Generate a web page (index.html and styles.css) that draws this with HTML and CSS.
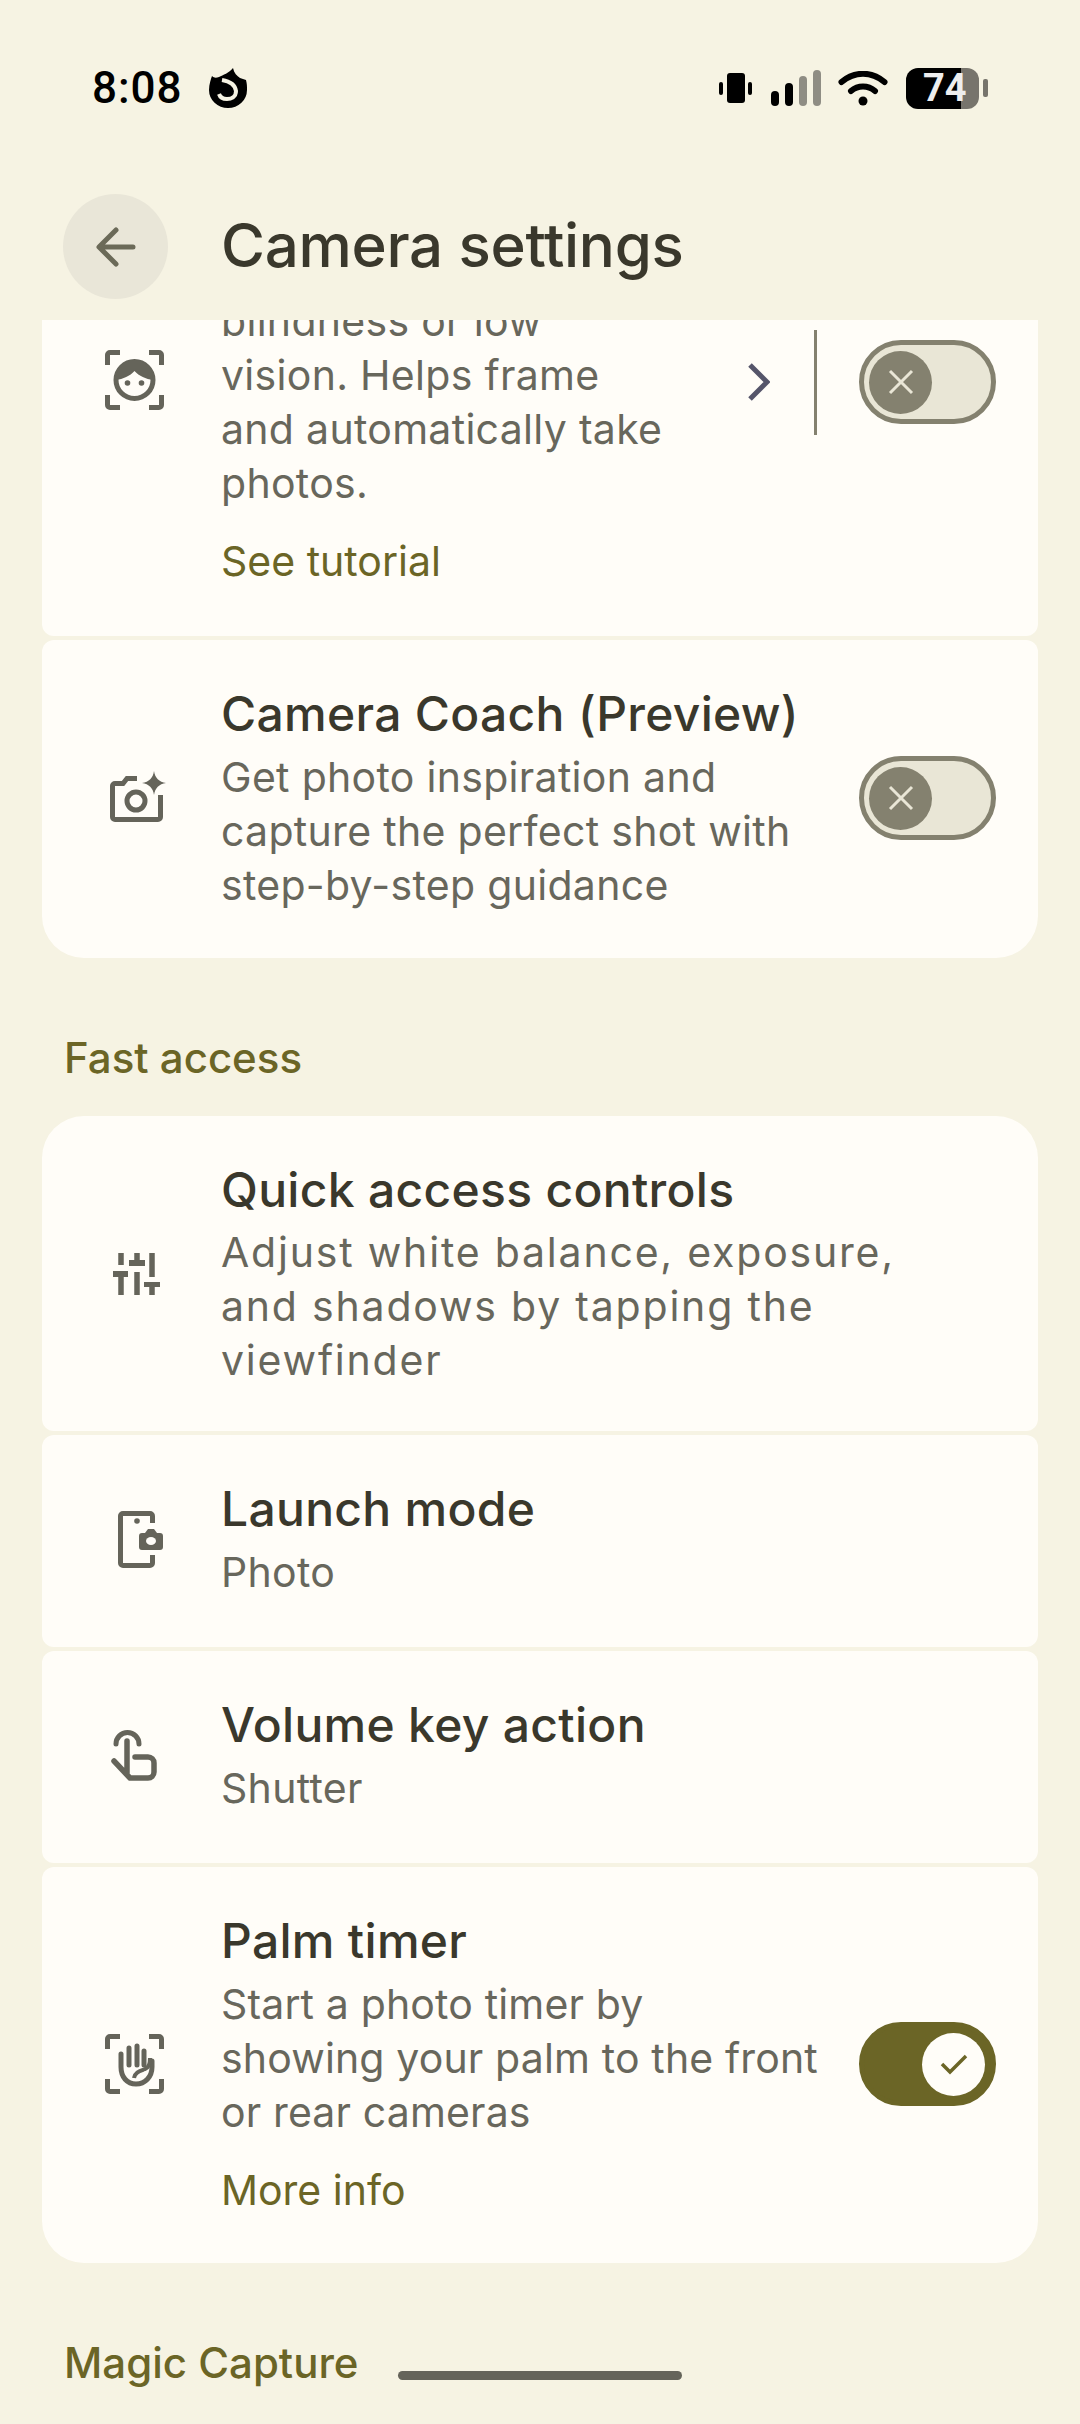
FILE: index.html
```html
<!DOCTYPE html>
<html lang="en">
<head>
    <meta charset="UTF-8">
    <meta name="viewport" content="width=device-width, initial-scale=1.0">
    <title>Camera settings</title>
    <link rel="stylesheet" href="styles.css">
</head>
<body>
    <div class="status-bar">
        <div class="status-left">
            <span class="clock">8:08</span>
            <!-- browser notification icon -->
            <svg class="fox" viewBox="0 0 40 40">
                <path d="M25 0c1 5 4 8 7 10l6 2c1 4 1 6 1 10a19 18 0 1 1-38 0c0-6 2-11 3-14 2 2 4 2 7 1 4-2 10-4 14-9z" fill="#000"/>
                <path d="M14 12c6 1 13 4 14 11 0 6-5 8-9 8-4 0-7-2-8-5" fill="none" stroke="#f6f3e3" stroke-width="4"/>
            </svg>
        </div>
        <div class="status-right">
            <svg class="vibrate" viewBox="0 0 33 30">
                <rect x="8" y="0" width="18" height="30" rx="3" fill="#000"/>
                <rect x="0" y="9" width="4" height="13" rx="2" fill="#000"/>
                <rect x="29" y="9" width="4" height="13" rx="2" fill="#000"/>
            </svg>
            <svg class="signal" viewBox="0 0 50 36">
                <rect x="0" y="21" width="8" height="15" rx="4" fill="#000"/>
                <rect x="14" y="13" width="8" height="23" rx="4" fill="#000"/>
                <rect x="28" y="6" width="8" height="30" rx="4" fill="#8f8d84"/>
                <rect x="42" y="0" width="8" height="36" rx="4" fill="#8f8d84"/>
            </svg>
            <svg class="wifi" viewBox="0 0 50 35">
                <path d="M3.500 11c13-11 30-11 43 0" fill="none" stroke="#000" stroke-width="6" stroke-linecap="round"/>
                <path d="M13 20c7-6 17-6 24 0" fill="none" stroke="#000" stroke-width="6" stroke-linecap="round"/>
                <circle cx="25" cy="30" r="4.500" fill="#000"/>
            </svg>
            <div class="battery">
                <div class="battery-body">
                    <span class="battery-level">74</span>
                </div>
                <div class="battery-tip"></div>
            </div>
        </div>
    </div>

    <div class="app-bar">
        <div class="back-button">
            <svg viewBox="0 0 42 42">
                <path d="M38 21H6M21 4L4 21l17 17" fill="none" stroke="#6b6a58" stroke-width="5" stroke-linecap="round" stroke-linejoin="round"/>
            </svg>
        </div>
        <h1 class="page-title">Camera settings</h1>
    </div>

    <div class="scroller">
        <div class="group">
            <div class="card card-cut">
                <svg class="icon" viewBox="0 0 58 58">
                    <path d="M1.500 14V4a2.500 2.500 0 0 1 2.500-2.500h10M43 1.500h10a2.500 2.500 0 0 1 2.500 2.500v10M1.500 44v10a2.500 2.500 0 0 0 2.500 2.500h10M43 56.500h10a2.500 2.500 0 0 0 2.500-2.500V44" fill="none" stroke="#65645a" stroke-width="5"/>
                    <circle cx="28.500" cy="29" r="18.500" fill="none" stroke="#65645a" stroke-width="5"/>
                    <path d="M10 29C10 18 18 9 28.500 9S47 18 47 29C40 28 33 25 28.500 20 24 25 17 28 10 29z" fill="#65645a"/>
                    <circle cx="21.500" cy="32" r="2.800" fill="#65645a"/>
                    <circle cx="35.500" cy="32" r="2.800" fill="#65645a"/>
                </svg>
                <div class="card-text narrow">
                    <p class="desc">blindness or low vision. Helps frame and automatically take photos.</p>
                    <p class="link">See tutorial</p>
                </div>
                <svg class="chevron" viewBox="0 0 22 38">
                    <path d="M2 2l17 17L2 36" fill="none" stroke="#55556a" stroke-width="5"/>
                </svg>
                <div class="divider"></div>
                <div class="toggle">
                    <div class="thumb">
                        <svg viewBox="0 0 26 26"><path d="M2 2l22 22M24 2L2 24" fill="none" stroke="#e9e6d6" stroke-width="3"/></svg>
                    </div>
                </div>
            </div>
            <div class="card card-last">
                <svg class="icon" viewBox="0 0 58 58">
                    <path d="M31 9.500H21l-4 5H9a2.500 2.500 0 0 0-2.500 2.500v31a2.500 2.500 0 0 0 2.500 2.500h43a2.500 2.500 0 0 0 2.500-2.500V26" fill="none" stroke="#65645a" stroke-width="5"/>
                    <circle cx="30" cy="32" r="9" fill="none" stroke="#65645a" stroke-width="5"/>
                    <path d="M48 2c1 7 5 11 12 12-7 1-11 5-12 12-1-7-5-11-12-12 7-1 11-5 12-12z" fill="#65645a"/>
                </svg>
                <div class="card-text">
                    <h3 class="title">Camera Coach (Preview)</h3>
                    <p class="desc">Get photo inspiration and capture the perfect shot with step-by-step guidance</p>
                </div>
                <div class="toggle">
                    <div class="thumb">
                        <svg viewBox="0 0 26 26"><path d="M2 2l22 22M24 2L2 24" fill="none" stroke="#e9e6d6" stroke-width="3"/></svg>
                    </div>
                </div>
            </div>
        </div>

        <h2 class="section">Fast access</h2>

        <div class="group">
            <div class="card card-first">
                <svg class="icon" viewBox="0 0 58 58">
                    <path d="M15 8v12M15 32v18M31 8v7M31 27v23M46 8v24M46 42v8" fill="none" stroke="#65645a" stroke-width="5.500"/>
                    <path d="M7 26h15v6H7zM23 15h16v6H23zM38 37h16v5H38z" fill="#65645a"/>
                </svg>
                <div class="card-text">
                    <h3 class="title">Quick access controls</h3>
                    <p class="desc wide">Adjust white balance, exposure,<br>and shadows by tapping the viewfinder</p>
                </div>
            </div>
            <div class="card">
                <svg class="icon" viewBox="0 0 58 58">
                    <path d="M46.500 13V6a2.500 2.500 0 0 0-2.500-2.500H17A2.500 2.500 0 0 0 14.500 6v47a2.500 2.500 0 0 0 2.500 2.500h27a2.500 2.500 0 0 0 2.500-2.500v-8" fill="none" stroke="#65645a" stroke-width="5"/>
                    <circle cx="31" cy="11" r="2.800" fill="#65645a"/>
                    <path d="M33 26a3 3 0 0 1 3-3h3l3-4h6l3 4h3a3 3 0 0 1 3 3v11a3 3 0 0 1-3 3H36a3 3 0 0 1-3-3z" fill="#65645a"/>
                    <ellipse cx="45" cy="31" rx="5" ry="4" fill="#fffdf8"/>
                </svg>
                <div class="card-text">
                    <h3 class="title">Launch mode</h3>
                    <p class="desc">Photo</p>
                </div>
            </div>
            <div class="card">
                <svg class="icon" viewBox="0 0 58 58">
                    <path d="M10 18a11.500 11.500 0 1 1 23 0" fill="none" stroke="#65645a" stroke-width="5" stroke-linecap="round"/>
                    <path d="M21 15v32M8 35l16 17h18a6 6 0 0 0 6-6v-9a6 6 0 0 0-6-6H29" fill="none" stroke="#65645a" stroke-width="5.500" stroke-linecap="round" stroke-linejoin="round"/>
                </svg>
                <div class="card-text">
                    <h3 class="title">Volume key action</h3>
                    <p class="desc">Shutter</p>
                </div>
            </div>
            <div class="card card-last">
                <svg class="icon" viewBox="0 0 58 58">
                    <path d="M1.500 14V4a2.500 2.500 0 0 1 2.500-2.500h10M43 1.500h10a2.500 2.500 0 0 1 2.500 2.500v10M1.500 44v10a2.500 2.500 0 0 0 2.500 2.500h10M43 56.500h10a2.500 2.500 0 0 0 2.500-2.500V44" fill="none" stroke="#65645a" stroke-width="5"/>
                    <path d="M15 19v13c0 10 6 17 15 17s16-7 16-17v-6M23 13v17M31 11v19M38 16v14" fill="none" stroke="#65645a" stroke-width="5" stroke-linecap="round"/>
                    <path d="M28 43c1-6 6-7 11-9 3-1 5-5 5-11" fill="none" stroke="#65645a" stroke-width="4"/>
                </svg>
                <div class="card-text">
                    <h3 class="title">Palm timer</h3>
                    <p class="desc tight">Start a photo timer by<br>showing your palm to the front or rear cameras</p>
                    <p class="link">More info</p>
                </div>
                <div class="toggle on">
                    <div class="thumb">
                        <svg viewBox="0 0 28 22"><path d="M2 11l8 8L26 3" fill="none" stroke="#6b6526" stroke-width="3.500"/></svg>
                    </div>
                </div>
            </div>
        </div>

        <h2 class="section">Magic Capture</h2>
    </div>

    <div class="home-bar"></div>
</body>
</html>
```

FILE: styles.css
```css
* { margin: 0; padding: 0; box-sizing: border-box; }

body {
    font-family: Inter, Roboto, sans-serif;
    background: #f6f3e3;
    width: 1080px;
    height: 2424px;
    overflow: hidden;
    position: relative;
    display: flex;
    flex-direction: column;
}

/* status bar */
.status-bar {
    margin-top: 68px;
    height: 40px;
    padding: 0 92px;
    display: flex;
    justify-content: space-between;
    align-items: center;
}

.status-left, .status-right { display: flex; align-items: center; }

.clock {
    font-family: Roboto, sans-serif;
    font-size: 44px;
    font-weight: 500;
    letter-spacing: 1px;
    color: #000;
    width: 116px;
}

.fox { width: 40px; height: 40px; }

.vibrate { width: 33px; height: 30px; margin-right: 19px; }
.signal { width: 50px; height: 36px; margin-right: 17px; }
.wifi { width: 50px; height: 35px; margin-right: 18px; }

.battery { display: flex; align-items: center; }

.battery-body {
    width: 73px;
    height: 41px;
    border-radius: 12px;
    background: linear-gradient(90deg, #000 0, #000 55px, #77746c 55px);
    display: flex;
    align-items: center;
    padding-left: 17px;
}

.battery-level {
    font-family: Roboto, sans-serif;
    font-size: 38px;
    font-weight: 700;
    color: #eeeeee;
}

.battery-tip {
    width: 5px;
    height: 18px;
    margin-left: 4px;
    border-radius: 2px;
    background: #77746c;
}

/* top app bar */
.app-bar {
    height: 105px;
    margin-top: 86px;
    margin-bottom: 21px;
    padding-left: 63px;
    display: flex;
    align-items: center;
}

.back-button {
    width: 105px;
    height: 105px;
    border-radius: 50%;
    background: #e9e6d8;
    display: flex;
    align-items: center;
    justify-content: center;
}

.back-button svg { width: 42px; height: 42px; }

.page-title {
    margin: -3px 0 0 53px;
    font-size: 60px;
    font-weight: 500;
    letter-spacing: -0.3px;
    color: #3a382c;
}

/* settings list */
.scroller {
    flex: 1;
    overflow: hidden;
    padding: 0 42px;
}

.group { display: flex; flex-direction: column; gap: 4px; }

.card {
    background: #fffdf8;
    border-radius: 12px;
    padding: 44px 42px 48px 0;
    display: flex;
    align-items: center;
}

.card-first { border-radius: 42px 42px 12px 12px; padding-bottom: 44px; }
.card-last { border-radius: 12px 12px 42px 42px; padding-bottom: 46px; }

/* top of this row has scrolled under the app bar */
.card-cut {
    margin-top: -70px;
    padding-bottom: 48px;
    align-items: flex-start;
}

.card-cut .icon { margin-top: 57px; }
.card-cut .chevron { margin-top: 69px; }
.card-cut .divider { margin-top: 36px; }
.card-cut .toggle { margin-top: 46px; }

.icon {
    flex: none;
    width: 58px;
    height: 58px;
    margin: 0 57px 0 64px;
    overflow: visible;
}

.card-text { flex: 1; min-width: 0; }
.card-text.narrow { flex: none; width: 445px; }

.title {
    font-size: 48px;
    font-weight: 500;
    letter-spacing: 0.3px;
    line-height: 60px;
    margin-bottom: 6px;
    color: #3a382c;
}

.desc {
    font-size: 41px;
    letter-spacing: 0.3px;
    line-height: 54px;
    color: #68675c;
}

.desc.wide { letter-spacing: 1.8px; margin-top: -1px; }
.desc.tight { letter-spacing: 0.15px; }

.link {
    margin-top: 24px;
    font-size: 41px;
    line-height: 54px;
    color: #6b6526;
}

.section {
    margin: 73px 0 31px 22px;
    font-size: 42px;
    font-weight: 500;
    line-height: 54px;
    color: #6b6526;
}

.chevron { flex: none; width: 22px; height: 38px; margin-left: 82px; }

.divider {
    flex: none;
    width: 3px;
    height: 105px;
    margin: 0 42px 0 44px;
    background: #84816f;
}

/* switches */
.toggle {
    flex: none;
    width: 137px;
    height: 84px;
    margin-left: 20px;
    border: 5px solid #84816f;
    border-radius: 42px;
    background: #e9e6d6;
    padding-left: 5px;
    display: flex;
    align-items: center;
}

.divider + .toggle { margin-left: 0; }

.thumb {
    width: 63px;
    height: 63px;
    border-radius: 50%;
    background: #84816f;
    display: flex;
    align-items: center;
    justify-content: center;
}

.thumb svg { width: 26px; height: 26px; }

.toggle.on {
    background: #6b6526;
    border-color: #6b6526;
    justify-content: flex-end;
    padding: 0 6px 0 0;
}

.toggle.on .thumb { background: #fffdf8; }
.toggle.on .thumb svg { width: 28px; height: 22px; }

.home-bar {
    position: absolute;
    left: 398px;
    top: 2371px;
    width: 284px;
    height: 9px;
    border-radius: 5px;
    background: #65645a;
}
```
